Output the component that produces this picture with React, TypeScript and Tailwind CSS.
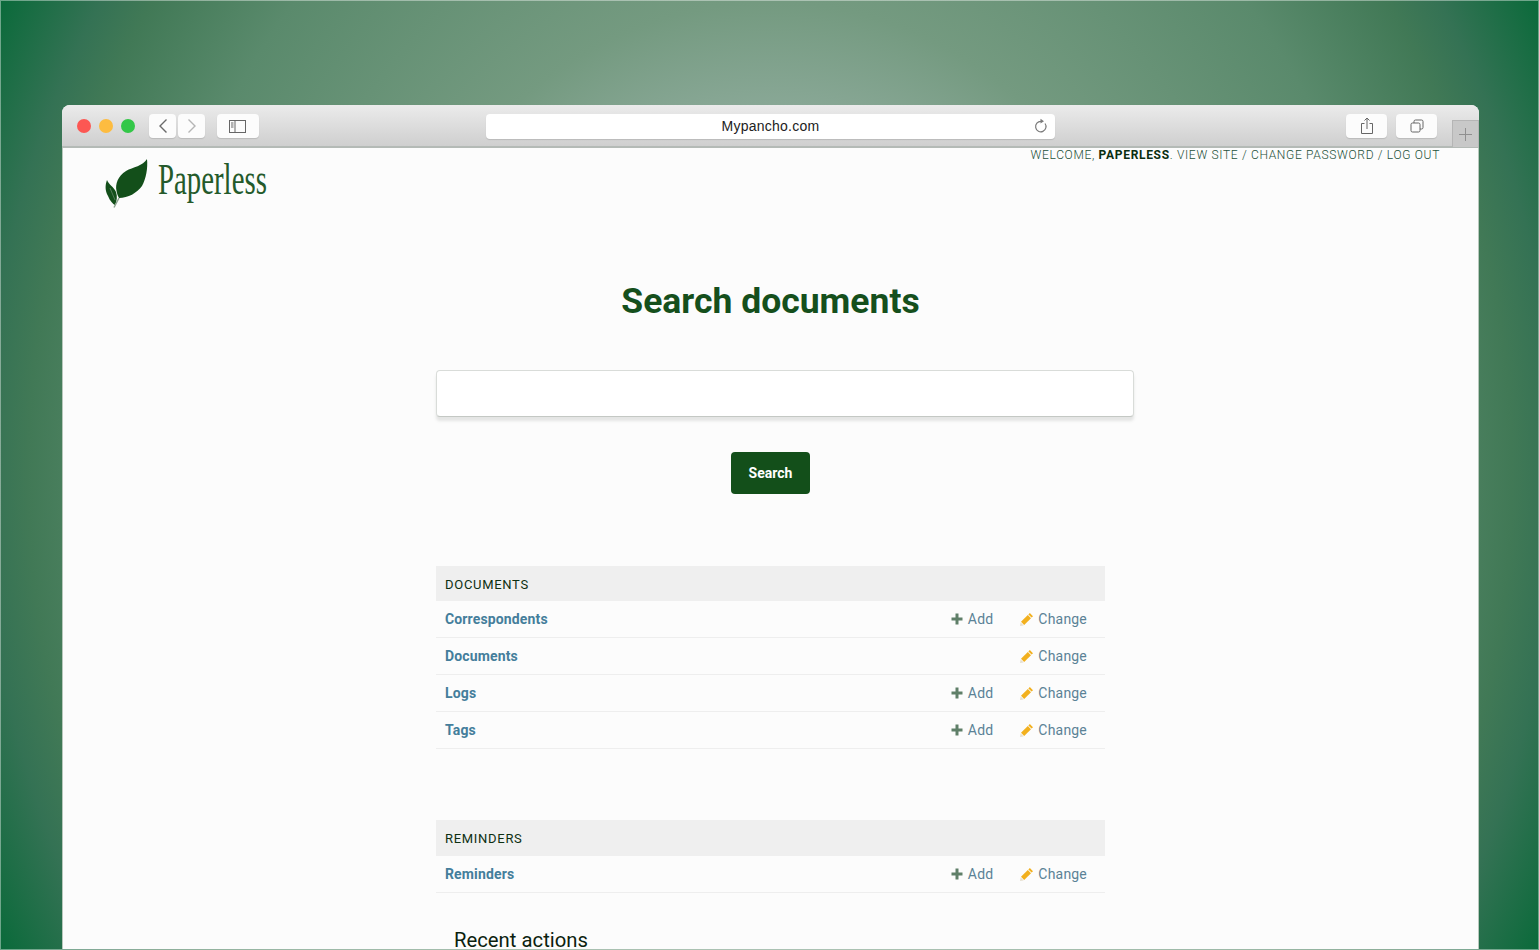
import React from "react";

const font = { fontFamily: "Roboto, 'Liberation Sans', sans-serif" };

function Plus() {
  return (
    <svg width="12" height="12" viewBox="0 0 12 12" className="shrink-0">
      <path d="M4.5 0.5h3v4h4v3h-4v4h-3v-4h-4v-3h4z" fill="#5f7f68" />
    </svg>
  );
}

function Pencil() {
  return (
    <svg width="13" height="13" viewBox="0 0 13 13" className="shrink-0">
      <path d="M9.8 0L13 3.2 11.6 4.6 8.4 1.4z" fill="#f2b01e" />
      <path d="M7.8 2L11 5.2 4.2 12 1 8.8z" fill="#f2b01e" />
      <path d="M0.6 9.4L3.6 12.4 0 13z" fill="#e6dfcf" />
    </svg>
  );
}

function Row({ name, add = true }: { name: string; add?: boolean }) {
  return (
    <div className="h-[37px] flex items-center border-b border-[#eeeeee] pl-[9px] text-[14px] leading-none">
      <span className="font-bold text-[#447e9b] flex-1 tracking-[0.14px]">{name}</span>
      {add && (
        <span className="flex items-center gap-[5px] text-[#5b8296] tracking-[0.2px]">
          <Plus />
          Add
        </span>
      )}
      <span className="flex items-center gap-[5px] text-[#5b8296] ml-[27px] mr-[18px] tracking-[0.2px]">
        <Pencil />
        Change
      </span>
    </div>
  );
}

function Module({ title, tall = false, children }: { title: string; tall?: boolean; children: React.ReactNode }) {
  return (
    <div>
      <div className={`${tall ? "h-[36px]" : "h-[35px]"} bg-[#efefef] flex items-center pl-[9px] pt-[2px] text-[13px] tracking-[0.7px] text-[#0d2f12]`}>
        {title}
      </div>
      {children}
    </div>
  );
}

function ToolBtn({ children, w }: { children: React.ReactNode; w: string }) {
  return (
    <div className={`${w} h-[24px] rounded-[4px] bg-[#fcfcfc] flex items-center justify-center shadow-[0_1px_1px_rgba(0,0,0,0.12)]`}>
      {children}
    </div>
  );
}

export default function App() {
  return (
    <div
      style={font}
      className="h-[950px] w-full overflow-hidden pt-[105px] px-[62px] shadow-[inset_0_0_0_1px_rgba(255,255,255,0.4)] bg-[radial-gradient(ellipse_873px_1005px_at_770px_475px,#9db5a4_0%,#88a795_37%,#749a80_47%,#5a8a6c_72%,#417956_85%,#347254_90%,#0a6a3a_100%)]"
    >
      <div className="w-[1417px] h-[844px] rounded-t-[8px] overflow-hidden bg-[#fcfcfc]">
        {/* Browser toolbar */}
        <div className="relative h-[43px] border-b-2 border-[#b4bab6] bg-gradient-to-b from-[#ebebeb] to-[#cfcfcf] flex items-center pt-[1px]">
          <div className="flex items-center gap-[8px] ml-[14.5px]">
            <span className="w-[14px] h-[14px] rounded-full bg-[#fc5753]" />
            <span className="w-[14px] h-[14px] rounded-full bg-[#fdbc40]" />
            <span className="w-[14px] h-[14px] rounded-full bg-[#33c748]" />
          </div>
          <div className="flex gap-[2px] ml-[14.5px]">
            <ToolBtn w="w-[27px]">
              <svg width="12" height="16" viewBox="0 0 12 16" fill="none" stroke="#6a6a6a" strokeWidth="1.4">
                <path d="M9.5 1.5L3 8l6.5 6.5" />
              </svg>
            </ToolBtn>
            <ToolBtn w="w-[27px]">
              <svg width="12" height="16" viewBox="0 0 12 16" fill="none" stroke="#b5b5b5" strokeWidth="1.4">
                <path d="M2.5 1.5L9 8l-6.5 6.5" />
              </svg>
            </ToolBtn>
          </div>
          <div className="ml-[12px]">
            <ToolBtn w="w-[42px]">
              <svg width="18" height="13" viewBox="0 0 18 13" fill="none" stroke="#666" strokeWidth="1">
                <rect x="0.5" y="0.5" width="16" height="12" />
                <path d="M6 0.5v12" />
                <path d="M2 3h2.5M2 5h2.5M2 7h2.5" />
              </svg>
            </ToolBtn>
          </div>
          <div className="ml-[227px] w-[569px] h-[25px] rounded-[4px] bg-white relative flex items-center justify-center text-[#222] shadow-[0_1px_1px_rgba(0,0,0,0.12)]" style={{ fontFamily: "'Liberation Sans', Arial, sans-serif" }}>
            <span className="text-[14px] tracking-[0.25px]">Mypancho.com</span>
            <svg width="14" height="16" viewBox="0 0 14 16" fill="none" stroke="#7a7a7a" strokeWidth="1.2" className="absolute right-[7px] top-[4px]">
              <path d="M11 5.5A5.2 5.2 0 1 1 7 3.4" />
              <path d="M6.5 0.8L10 3.2 6.5 5.6z" fill="#7a7a7a" stroke="none" />
            </svg>
          </div>
          <div className="ml-[291px]">
            <ToolBtn w="w-[41px]">
              <svg width="14" height="18" viewBox="0 0 14 18" fill="none" stroke="#666" strokeWidth="1">
                <path d="M4.5 6.5H1.5v10h11v-10H9.5" />
                <path d="M7 12V1M4.5 3.5L7 1l2.5 2.5" />
              </svg>
            </ToolBtn>
          </div>
          <div className="ml-[9px]">
            <ToolBtn w="w-[41px]">
              <svg width="14" height="14" viewBox="0 0 14 14" fill="none" stroke="#666" strokeWidth="1">
                <rect x="1" y="4" width="9" height="9" rx="1.5" />
                <path d="M4 4V2.5A1.5 1.5 0 0 1 5.5 1h6A1.5 1.5 0 0 1 13 2.5v6a1.5 1.5 0 0 1-1.5 1.5H10" />
              </svg>
            </ToolBtn>
          </div>
          <div className="absolute right-0 top-[15px] w-[27px] h-[27px] bg-[#c8c8c8] border border-[#b5b5b5] border-b-0 flex items-center justify-center">
            <svg width="13" height="13" viewBox="0 0 13 13" stroke="#8f8f8f" strokeWidth="1">
              <path d="M6.5 0v13M0 6.5h13" />
            </svg>
          </div>
        </div>

        <div className="h-[801px] border-x border-[#b8c8bc]">
          {/* Page header */}
          <div className="flex justify-between h-[72px]">
            <div className="relative ml-[41px] mt-[10px] flex items-start">
              <svg width="44" height="50" viewBox="0 0 44 50">
                <path d="M43 1C39 8 29 9 22 13 14 18 11 26 12.5 33 13 36 14 38 15 40 24 40 33 35 38 28 42 21 44 10 43 1z" fill="#134f1a" />
                <path d="M3 22C1 27 1 33 4 38 6 43 9 46 11 47 13 43 13.5 38 12 34 10 29 5 27 3 22z" fill="#134f1a" />
                <path d="M10 49.5L15 40" fill="none" stroke="#8aa08c" strokeWidth="1.4" />
                <path d="M6 30L11 42" fill="none" stroke="#6f8f74" strokeWidth="0.7" />
              </svg>
              <span className="absolute left-[54px] top-[-3px] text-[44px] leading-[50px] text-[#245a2b] origin-left scale-x-[0.655] whitespace-nowrap" style={{ fontFamily: "'Liberation Serif', serif" }}>
                Paperless
              </span>
            </div>
            <div className="mr-[38px] mt-[1px] text-[12px] leading-[12px] tracking-[0.68px] font-light text-[#24513a] whitespace-nowrap">
              WELCOME, <strong className="font-bold text-[#0a2e10]">PAPERLESS</strong>. VIEW SITE / CHANGE PASSWORD / LOG OUT
            </div>
          </div>

          {/* Main column */}
          <div className="w-[669px] mx-auto">
            <h1 className="text-center text-[35.5px] leading-[42px] font-bold text-[#154f1c] mt-[60px] h-[42px]">
              Search documents
            </h1>
            <div className="w-[698px] h-[47px] mt-[48px] rounded-[4px] bg-white border border-[#d9dcd9] border-b-[#c4c8c4] shadow-[0_4px_3px_rgba(120,130,120,0.18)]" />
            <div className="flex justify-center mt-[35px]">
              <div className="w-[79px] h-[42px] pt-[1px] rounded-[4px] bg-[#134f1a] flex items-center justify-center text-white text-[14px] font-bold">
                Search
              </div>
            </div>
            <div className="mt-[72px]">
              <Module title="DOCUMENTS">
                <Row name="Correspondents" />
                <Row name="Documents" add={false} />
                <Row name="Logs" />
                <Row name="Tags" />
              </Module>
            </div>
            <div className="mt-[71px]">
              <Module title="REMINDERS" tall>
                <Row name="Reminders" />
              </Module>
            </div>
            <h2 className="ml-[18px] mt-[35px] text-[20.3px] leading-[24px] text-[#0c1f0f]">Recent actions</h2>
          </div>
        </div>
      </div>
    </div>
  );
}
